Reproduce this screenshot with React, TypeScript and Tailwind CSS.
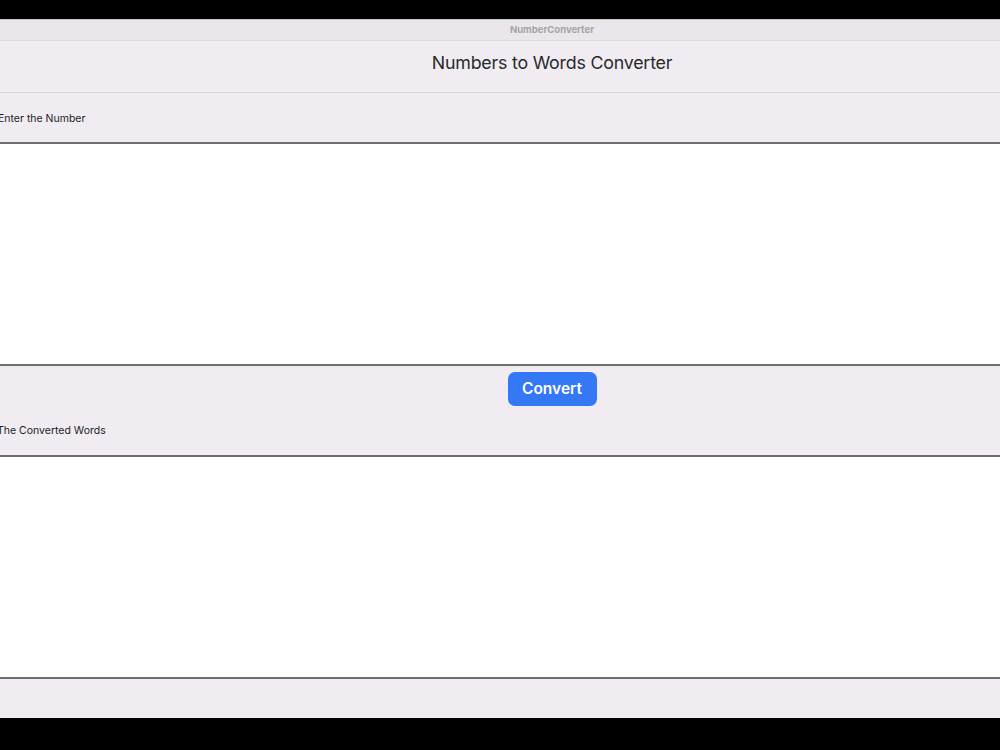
import React from "react";

export default function App() {
  return (
    <div className="w-[1000px] h-[750px] bg-black overflow-hidden font-['Inter',sans-serif]">
      <div className="h-[19px]" />
      {/* window body, a bit wider than the viewport */}
      <div className="ml-[-18px] w-[1140px] flex flex-col bg-[#f0ecf2] border-t border-[#c9c6cb]">
        <div className="h-[21px] flex items-center justify-center bg-[#eae6ec] border-b border-[#dedae0]">
          <span className="text-[9.5px] font-bold text-[#a5a3a7] leading-none">NumberConverter</span>
        </div>
        <header className="h-[52px] flex items-center justify-center pb-[6px] border-b border-[#dbd7dd]">
          <h1 className="text-[17.8px] text-[#2a2a2c] tracking-[-0.2px]">Numbers to Words Converter</h1>
        </header>
        <div className="h-[49px] flex items-center pl-[16px] pt-[3px]">
          <label className="text-[10.5px] text-[#1d1d1f]">Enter the Number</label>
        </div>
        <textarea className="h-[224px] bg-white border-y-2 border-[#6e6d70] resize-none outline-none" />
        <div className="h-[89px] flex flex-col">
          <div className="flex justify-center pt-[6px]">
            <button className="w-[89px] h-[34px] rounded-[7px] bg-[#3478f6] text-white text-[15.5px] font-semibold">
              Convert
            </button>
          </div>
          <div className="flex-1 flex items-center pl-[15px]">
            <label className="text-[10.5px] text-[#1d1d1f]">The Converted Words</label>
          </div>
        </div>
        <textarea readOnly className="h-[224px] bg-white border-y-2 border-[#6e6d70] resize-none outline-none" />
        <div className="h-[39px]" />
      </div>
    </div>
  );
}
